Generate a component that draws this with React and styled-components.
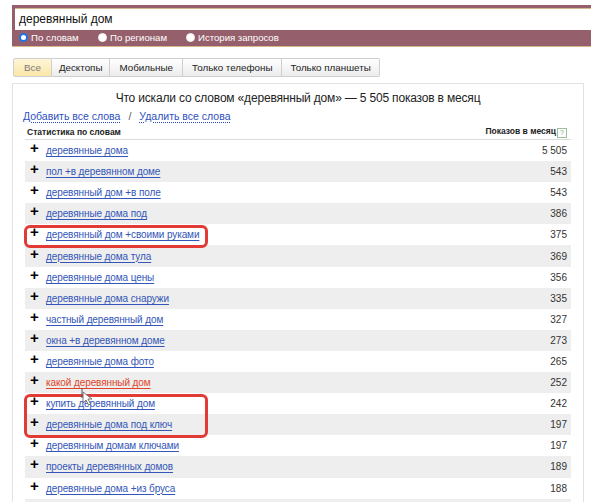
import styled, { createGlobalStyle } from "styled-components";

const GlobalStyle = createGlobalStyle`
  body {
    margin: 0;
    background: #ffffff;
    font-family: "Liberation Sans", Arial, sans-serif;
    color: #000;
  }
`;

const Page = styled.div`
  width: 591px;
  height: 502px;
  overflow: hidden;
  position: relative;
  padding-top: 5px;
  box-sizing: border-box;
`;

const SearchBar = styled.div`
  margin-left: 12px;
  background: #955f6b;
  border-bottom: 1px solid #d6b68c;
  padding: 3px 0 0 3px;
  height: 42px;
  box-sizing: border-box;
`;

const Input = styled.div`
  background: #fff;
  border-top: 1px solid #d6b68c;
  height: 21px;
  padding-left: 4px;
  font-size: 12px;
  line-height: 21px;
  color: #111;
`;

const RadioRow = styled.div`
  display: flex;
  align-items: center;
  height: 14px;
  padding-left: 4px;
`;

const RadioItem = styled.label`
  display: flex;
  align-items: center;
  gap: 3px;
  width: ${(p) => p.$w}px;
  font-size: 9.6px;
  color: #fff;
`;

const RadioDot = styled.span`
  width: 9px;
  height: 9px;
  border-radius: 50%;
  box-sizing: border-box;
  background: #fff;
  border: ${(p) => (p.$checked ? "2px solid #1e73e8" : "1px solid #f0f0f0")};
`;

const Tabs = styled.div`
  display: flex;
  margin: 11px 0 0 13px;
  height: 19px;
`;

const Tab = styled.div`
  padding: 0 ${(p) => p.$pad || 9}px;
  font-size: 9.8px;
  line-height: 17px;
  border: 1px solid #cfcfcf;
  border-left-width: ${(p) => (p.$first ? 1 : 0)}px;
  color: ${(p) => (p.$active ? "#7a7a7a" : "#222")};
  background: ${(p) =>
    p.$active
      ? "linear-gradient(#fff6d8, #fbe6a8)"
      : "linear-gradient(#ffffff, #ececec)"};
  border-radius: ${(p) =>
    p.$first ? "2px 0 0 2px" : p.$last ? "0 2px 2px 0" : "0"};
`;

const Panel = styled.div`
  margin: 6px 0 0 12px;
  width: 572px;
  border: 1px solid #e2e2e2;
  border-bottom: none;
  box-sizing: border-box;
  padding: 0 12px;
`;

const Title = styled.div`
  text-align: center;
  font-size: 12px;
  letter-spacing: -0.18px;
  color: #222;
  margin-top: 6px;
  line-height: 16px;
`;

const Actions = styled.div`
  display: flex;
  align-items: center;
  margin-top: 2px;
  margin-left: -2px;
  font-size: 10.5px;
  line-height: 16px;
  gap: 8px;
`;

const ActionLink = styled.a`
  color: #2f4fc1;
  text-decoration: underline dotted;
  text-underline-offset: 2px;
`;

const Slash = styled.span`
  color: #555;
`;

const HeadRow = styled.div`
  display: flex;
  justify-content: space-between;
  align-items: center;
  height: 14px;
  margin-top: 1px;
  border-bottom: 1px solid #dcdcdc;
  padding: 0 4px 0 2px;
  font-size: 8.5px;
  font-weight: bold;
  color: #222;
`;

const HelpBox = styled.span`
  display: inline-block;
  width: 8px;
  height: 8px;
  margin-left: 1px;
  border: 1px solid #9bbf9b;
  font-size: 7px;
  line-height: 8px;
  text-align: center;
  color: #7aa07a;
  font-weight: normal;
  vertical-align: -1px;
`;

const Row = styled.div`
  display: flex;
  align-items: center;
  height: 21.1px;
  background: ${(p) => (p.$odd ? "#eeeeee" : "#ffffff")};
  font-size: 10px;
  padding: 0 4px 0 5px;
`;

const Plus = styled.span`
  width: 16px;
  font-size: 15px;
  font-weight: bold;
  line-height: 12px;
  margin-top: -5px;
  color: #000;
`;

const WordLink = styled.a`
  color: ${(p) => (p.$hover ? "#e0452a" : "#3356b8")};
  text-decoration: underline;
  text-underline-offset: 2px;
  letter-spacing: -0.1px;
  flex: 1;
`;

const Count = styled.span`
  color: #333;
`;

const Group = styled.div`
  position: relative;
`;

const Mark = styled.span`
  position: absolute;
  left: -1px;
  top: 1px;
  width: 184px;
  bottom: -3px;
  border: 3px solid #e23a35;
  border-radius: 6px;
  box-sizing: border-box;
  pointer-events: none;
`;

const Cursor = styled.svg`
  position: absolute;
  left: 80px;
  top: 388px;
`;

const rows = [
  ["деревянные дома", "5 505"],
  ["пол +в деревянном доме", "543"],
  ["деревянный дом +в поле", "543"],
  ["деревянные дома под", "386"],
  ["деревянный дом +своими руками", "375", "mark"],
  ["деревянные дома тула", "369"],
  ["деревянные дома цены", "356"],
  ["деревянные дома снаружи", "335"],
  ["частный деревянный дом", "327"],
  ["окна +в деревянном доме", "273"],
  ["деревянные дома фото", "265"],
  ["какой деревянный дом", "252", "hover"],
  ["купить деревянный дом", "242", "mark2"],
  ["деревянные дома под ключ", "197", "mark2"],
  ["деревянным домам ключами", "197"],
  ["проекты деревянных домов", "189"],
  ["деревянные дома +из бруса", "188"],
  ["", ""],
];

function WordRow({ word, count, index }) {
  return (
    <Row $odd={index % 2 === 1}>
      {word && <Plus>+</Plus>}
      <WordLink $hover={rows[index][2] === "hover"}>{word}</WordLink>
      <Count>{count}</Count>
    </Row>
  );
}

export default function App() {
  const body = [];
  let i = 0;
  while (i < rows.length) {
    const tag = rows[i][2];
    if (tag === "mark" || tag === "mark2") {
      const group = [];
      while (i < rows.length && rows[i][2] === tag) {
        group.push(<WordRow key={i} word={rows[i][0]} count={rows[i][1]} index={i} />);
        i++;
      }
      body.push(
        <Group key={"g" + i}>
          {group}
          <Mark />
        </Group>
      );
    } else {
      body.push(<WordRow key={i} word={rows[i][0]} count={rows[i][1]} index={i} />);
      i++;
    }
  }

  return (
    <Page>
      <GlobalStyle />
      <SearchBar>
        <Input>деревянный дом</Input>
        <RadioRow>
          <RadioItem $w={79}>
            <RadioDot $checked />
            По словам
          </RadioItem>
          <RadioItem $w={88}>
            <RadioDot />
            По регионам
          </RadioItem>
          <RadioItem $w={120}>
            <RadioDot />
            История запросов
          </RadioItem>
        </RadioRow>
      </SearchBar>
      <Tabs>
        <Tab $first $active $pad={10}>Все</Tab>
        <Tab $pad={7}>Десктопы</Tab>
        <Tab>Мобильные</Tab>
        <Tab>Только телефоны</Tab>
        <Tab $last $pad={8}>Только планшеты</Tab>
      </Tabs>
      <Panel>
        <Title>Что искали со словом «деревянный дом» — 5 505 показов в месяц</Title>
        <Actions>
          <ActionLink>Добавить все слова</ActionLink>
          <Slash>/</Slash>
          <ActionLink>Удалить все слова</ActionLink>
        </Actions>
        <HeadRow>
          <span>Статистика по словам</span>
          <span>
            Показов в месяц<HelpBox>?</HelpBox>
          </span>
        </HeadRow>
        {body}
      </Panel>
      <Cursor width="16" height="20" viewBox="0 0 16 20">
        <line x1="2" y1="0" x2="2" y2="10" stroke="#555" strokeWidth="1" />
        <path d="M3 4 L3 15 L6 12 L8.5 17 L10.5 16 L8 11 L12 11 Z" fill="#fff" stroke="#666" strokeWidth="0.9" />
      </Cursor>
    </Page>
  );
}
